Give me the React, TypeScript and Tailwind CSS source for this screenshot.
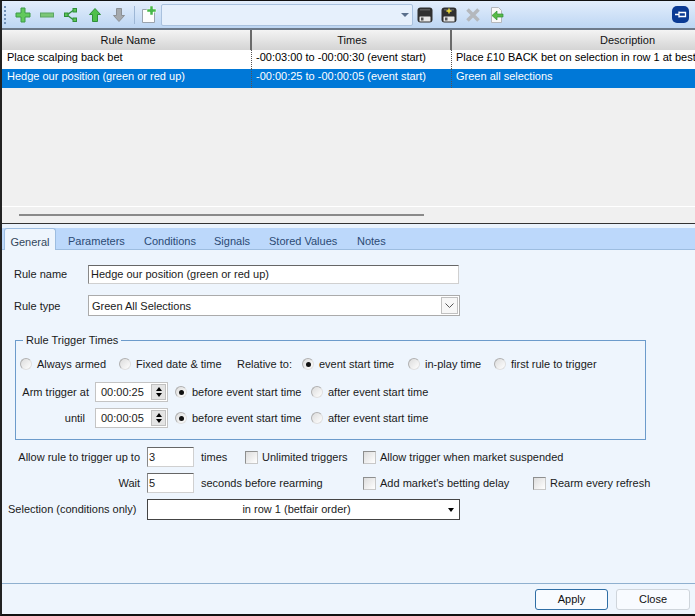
import type { ReactNode } from 'react';

const ruleRows = [
  { name: 'Place scalping back bet', times: '-00:03:00 to -00:00:30 (event start)', desc: 'Place £10 BACK bet on selection in row 1 at best available price' },
  { name: 'Hedge our position (green or red up)', times: '-00:00:25 to -00:00:05 (event start)', desc: 'Green all selections', selected: true },
];

const tabs = [
  { label: 'Parameters', width: 'w-[76px]' },
  { label: 'Conditions', width: 'w-[70px]' },
  { label: 'Signals', width: 'w-[55px]' },
  { label: 'Stored Values', width: 'w-[88px]' },
  { label: 'Notes', width: 'w-[40px]' },
];

function PlusIcon() {
  return (
    <svg width="16" height="16" viewBox="0 0 16 16">
      <path d="M6 1h4v5h5v4h-5v5H6v-5H1V6h5z" fill="#62c95c" stroke="#3c9a48" strokeWidth="1" />
    </svg>
  );
}

function MinusIcon() {
  return (
    <svg width="16" height="16" viewBox="0 0 16 16">
      <rect x="1.5" y="6" width="13" height="4" fill="#7cc777" stroke="#5aa565" />
    </svg>
  );
}

function BranchIcon() {
  return (
    <svg width="14" height="16" viewBox="0 0 14 16">
      <path d="M3 8 9 3.5M3 8l6 4.5" fill="none" stroke="#2f8f3a" strokeWidth="1.4" />
      <rect x="0.5" y="6" width="3.5" height="3.5" fill="#5cc455" stroke="#2f8f3a" />
      <rect x="9" y="1.5" width="3.5" height="3.5" fill="#5cc455" stroke="#2f8f3a" />
      <rect x="9" y="11" width="3.5" height="3.5" fill="#5cc455" stroke="#2f8f3a" />
    </svg>
  );
}

function ArrowIcon({ up, color, edge }: { up?: boolean; color: string; edge: string }) {
  return (
    <svg width="12" height="14" viewBox="0 0 12 14">
      <path
        d={up ? 'M6 .5 11.5 6.5H8.5v7h-5v-7H.5z' : 'M6 13.5 11.5 7.5H8.5v-7h-5v7H.5z'}
        fill={color}
        stroke={edge}
      />
    </svg>
  );
}

function NewDocIcon() {
  return (
    <svg width="16" height="18" viewBox="0 0 16 18">
      <path d="M1.5 3.5h9l3 3v10h-12z" fill="#fdfdfd" stroke="#9aa3ad" />
      <path d="M9 0h3v3h3v3h-3v3H9V6H6V3h3z" fill="#47b84a" stroke="#fff" strokeWidth="0.5" />
    </svg>
  );
}

function FloppyIcon({ plus }: { plus?: boolean }) {
  return (
    <svg width="16" height="16" viewBox="0 0 16 16">
      <rect x="0.5" y="0.5" width="15" height="15" rx="3" fill="#303030" />
      <rect x="2.5" y="9.5" width="11" height="5" rx="0.5" fill="#e8e8e8" />
      <rect x="4" y="10.5" width="2.5" height="3" fill="#555" />
      <rect x="3" y="2" width="10" height="1.5" fill="#5a5a5a" />
      {plus && <path d="M5.5 4h5M8 1.5v5" stroke="#f5e33c" strokeWidth="1.4" />}
    </svg>
  );
}

function CrossIcon() {
  return (
    <svg width="16" height="16" viewBox="0 0 16 16">
      <path d="M2.5 2.5 13.5 13.5M13.5 2.5 2.5 13.5" stroke="#b4b8bd" strokeWidth="3.6" />
    </svg>
  );
}

function ImportDocIcon() {
  return (
    <svg width="16" height="18" viewBox="0 0 16 18">
      <path d="M2.5 1.5h7l3 3v12h-10z" fill="#f8f8f8" stroke="#b4b8bd" />
      <path d="M3 9.5 8 5v3h6v3H8v3z" fill="#58bb45" stroke="#2f8f3a" strokeWidth="0.7" />
    </svg>
  );
}

function PinIcon() {
  return (
    <svg width="17" height="17" viewBox="0 0 17 17">
      <rect width="17" height="17" rx="5" fill="#0a3a94" />
      <path d="M3 8.5h4M7 5.5v6M7 6.5h6.5v4H7" fill="none" stroke="#fff" strokeWidth="1.3" />
    </svg>
  );
}

function ToolSlot({ children }: { children: ReactNode }) {
  return <div className="flex w-[24px] items-center justify-center">{children}</div>;
}

function Toolbar() {
  return (
    <div className="flex h-[27px] shrink-0 items-center bg-gradient-to-b from-[#e3eefc] to-[#bdd6f3]">
      <div className="ml-[2px] flex h-[18px] w-[2px] flex-col justify-between">
        {[0, 1, 2, 3, 4].map((dot) => (
          <span key={dot} className="h-[2px] w-[2px] bg-[#6f8fb5]" />
        ))}
      </div>
      <div className="ml-[5px] flex items-center">
        <ToolSlot><PlusIcon /></ToolSlot>
        <ToolSlot><MinusIcon /></ToolSlot>
        <ToolSlot><BranchIcon /></ToolSlot>
        <ToolSlot><ArrowIcon up color="#4fc04a" edge="#2f8f3a" /></ToolSlot>
        <ToolSlot><ArrowIcon color="#a5a9ad" edge="#8c9095" /></ToolSlot>
      </div>
      <div className="ml-[3px] h-[18px] w-[1px] bg-[#9db7d6]" />
      <div className="ml-[6px]"><NewDocIcon /></div>
      <div className="ml-[4px] flex h-[22px] w-[252px] items-center justify-end rounded-[2px] border border-[#a9c1de] bg-[#e6f0fc] pr-[3px]">
        <span className="h-0 w-0 border-x-[4px] border-t-[4px] border-x-transparent border-t-[#5a6f8c]" />
      </div>
      <div className="flex items-center">
        <ToolSlot><FloppyIcon /></ToolSlot>
        <ToolSlot><FloppyIcon plus /></ToolSlot>
        <ToolSlot><CrossIcon /></ToolSlot>
        <ToolSlot><ImportDocIcon /></ToolSlot>
      </div>
      <div className="ml-auto mr-[6px]"><PinIcon /></div>
    </div>
  );
}

function RulesGrid() {
  return (
    <div className="flex h-[195px] shrink-0 flex-col overflow-hidden border-t-2 border-[#6d7a8a] bg-[#f0f0f0]">
      <div className="flex h-[20px] shrink-0 bg-gradient-to-b from-[#f4f4f4] to-[#d4d4d4] text-[#111]">
        <div className="flex w-[250px] shrink-0 items-center justify-center border-r-2 border-[#6a6a6a] pl-[4px]">Rule Name</div>
        <div className="flex w-[200px] shrink-0 items-center justify-center border-r-2 border-[#6a6a6a] pl-[2px]">Times</div>
        <div className="flex flex-1 items-center justify-center pl-[108px]">Description</div>
      </div>
      {ruleRows.map((row) => (
        <div
          key={row.name}
          className={`flex h-[19px] shrink-0 whitespace-nowrap ${row.selected ? 'bg-[#0078d7] text-white' : 'bg-white text-black'}`}
        >
          <div className="w-[250px] shrink-0 border-r border-dotted border-[#555] pl-[5px] leading-[15px]">{row.name}</div>
          <div className="w-[200px] shrink-0 border-r border-dotted border-[#555] pl-[4px] leading-[15px]">{row.times}</div>
          <div className="min-w-0 flex-1 overflow-hidden pl-[4px] leading-[15px]">{row.desc}</div>
        </div>
      ))}
      <div className="mt-auto flex h-[17px] shrink-0 items-center border-t border-white pl-[17px]">
        <div className="h-[2px] w-[405px] bg-[#8a8a8a]" />
      </div>
    </div>
  );
}

function Radio({ checked }: { checked?: boolean }) {
  return (
    <span className="flex h-[12px] w-[12px] shrink-0 items-center justify-center rounded-full border border-[#b0b0b0] border-r-[#e0e0e0] border-b-[#e0e0e0] bg-gradient-to-br from-[#dcdcdc] to-white">
      {checked && <span className="h-[5px] w-[5px] rounded-full bg-[#111]" />}
    </span>
  );
}

function RadioLabel({ label, checked, width }: { label: string; checked?: boolean; width?: string }) {
  return (
    <span className={`flex shrink-0 items-center gap-[5px] whitespace-nowrap ${width ?? ''}`}>
      <Radio checked={checked} />
      {label}
    </span>
  );
}

function CheckLabel({ label, width }: { label: string; width?: string }) {
  return (
    <span className={`flex shrink-0 items-center gap-[4px] whitespace-nowrap ${width ?? ''}`}>
      <span className="h-[13px] w-[13px] shrink-0 border border-[#8e8f8f] border-r-[#c8c8c8] border-b-[#c8c8c8] bg-gradient-to-br from-[#dcdcdc] to-white" />
      {label}
    </span>
  );
}

function TimeSpinner({ value }: { value: string }) {
  return (
    <div className="flex h-[20px] w-[73px] shrink-0 items-center justify-between border border-[#c4c4c4] bg-white pl-[5px] pr-[1px]">
      {value}
      <div className="flex h-[16px] w-[15px] flex-col items-center justify-center gap-[2px] border border-[#c0c0c0] bg-[#e4e4e4]">
        <span className="h-0 w-0 border-x-[3.5px] border-b-[4px] border-x-transparent border-b-black" />
        <span className="h-0 w-0 border-x-[3.5px] border-t-[4px] border-x-transparent border-t-black" />
      </div>
    </div>
  );
}

function SmallInput({ value }: { value: string }) {
  return (
    <div className="ml-[7px] flex h-[20px] w-[47px] shrink-0 items-center border border-[#d0d0d0] border-t-[#666] border-l-[#888] bg-white pl-[1px]">
      {value}
    </div>
  );
}

function GeneralTab() {
  return (
    <div className="flex min-h-0 flex-1 flex-col bg-[#eef5fd] text-[#1a1a1a]">
      <div className="mt-[15px] flex h-[19px] items-center">
        <span className="ml-[12px] w-[74px]">Rule name</span>
        <div className="flex h-[19px] w-[371px] items-center border border-[#d0d0d0] border-t-[#666] border-l-[#888] bg-white pl-[2px]">
          Hedge our position (green or red up)
        </div>
      </div>
      <div className="mt-[11px] flex h-[21px] items-center pt-[1px]">
        <span className="ml-[12px] w-[74px]">Rule type</span>
        <div className="-mt-[1px] flex h-[21px] w-[372px] items-center justify-between border border-[#ababab] bg-white pl-[3px] pr-[1px]">
          <span className="pt-[1px]">Green All Selections</span>
          <span className="flex h-[17px] w-[17px] items-center justify-center border border-[#c0c0c0] bg-[#f7f7f7]">
            <svg width="9" height="5" viewBox="0 0 9 5"><path d="M.5.5 4.5 4.5 8.5.5" fill="none" stroke="#555" /></svg>
          </span>
        </div>
      </div>

      <fieldset className="mt-[17px] ml-[13px] h-[107px] w-[631px] border border-[#6c9bcb]">
        <legend className="ml-[7px] px-[3px] leading-[14px]">Rule Trigger Times</legend>
        <div className="mt-[8px] flex h-[18px] items-center pl-[4px]">
          <RadioLabel label="Always armed" width="w-[99px]" />
          <RadioLabel label="Fixed date & time" width="w-[118px]" />
          <span className="w-[65px] shrink-0">Relative to:</span>
          <RadioLabel label="event start time" checked width="w-[106px]" />
          <RadioLabel label="in-play time" width="w-[86px]" />
          <RadioLabel label="first rule to trigger" />
        </div>
        <div className="mt-[9px] flex h-[20px] items-center">
          <span className="w-[73px] shrink-0 text-right">Arm trigger at</span>
          <div className="ml-[6px]"><TimeSpinner value="00:00:25" /></div>
          <div className="ml-[7px]"><RadioLabel label="before event start time" checked width="w-[136px]" /></div>
          <RadioLabel label="after event start time" />
        </div>
        <div className="mt-[6px] flex h-[20px] items-center">
          <span className="w-[69px] shrink-0 text-right">until</span>
          <div className="ml-[10px]"><TimeSpinner value="00:00:05" /></div>
          <div className="ml-[7px]"><RadioLabel label="before event start time" checked width="w-[136px]" /></div>
          <RadioLabel label="after event start time" />
        </div>
      </fieldset>

      <div className="mt-[7px] flex h-[20px] items-center">
        <span className="w-[138px] shrink-0 text-right">Allow rule to trigger up to</span>
        <SmallInput value="3" />
        <span className="ml-[7px] w-[44px] shrink-0">times</span>
        <CheckLabel label="Unlimited triggers" width="w-[118px]" />
        <CheckLabel label="Allow trigger when market suspended" />
      </div>
      <div className="mt-[6px] flex h-[20px] items-center">
        <span className="w-[138px] shrink-0 text-right">Wait</span>
        <SmallInput value="5" />
        <span className="ml-[7px] w-[162px] shrink-0">seconds before rearming</span>
        <CheckLabel label="Add market's betting delay" width="w-[170px]" />
        <CheckLabel label="Rearm every refresh" />
      </div>
      <div className="mt-[6px] flex h-[21px] items-center">
        <span className="ml-[6px] w-[132px] shrink-0 whitespace-nowrap">Selection (conditions only)</span>
        <div className="relative ml-[7px] flex h-[21px] w-[313px] items-center justify-center border border-[#444] bg-white pr-[14px]">
          in row 1 (betfair order)
          <span className="absolute right-[5px] h-0 w-0 border-x-[3.5px] border-t-[4px] border-x-transparent border-t-black" />
        </div>
      </div>
    </div>
  );
}

function TabStrip() {
  return (
    <div className="flex h-[22px] shrink-0 items-end border-b border-[#9dbde0] bg-[#bcd8fb] pl-[1px]">
      <div className="-mb-[1px] ml-[1px] flex h-[22px] w-[52px] items-center justify-center rounded-t-[3px] border border-b-0 border-[#9dbde0] bg-[#eef5fd] pt-[6px] text-[#33475c]">General</div>
      <div className="ml-[12px] flex">
        {tabs.map((tab) => (
          <div key={tab.label} className={`flex h-[21px] items-center pt-[5px] text-[#2b4a74] ${tab.width}`}>{tab.label}</div>
        ))}
      </div>
    </div>
  );
}

export default function App() {
  return (
    <div className="flex h-[616px] w-[695px] flex-col overflow-hidden border-t border-b-2 border-l-2 border-t-[#111] border-b-[#111] border-l-[#222] bg-[#eef5fd] font-['Liberation_Sans',Arial,sans-serif] text-[11px]">
      <Toolbar />
      <RulesGrid />
      <div className="h-[1px] shrink-0 bg-[#333]" />
      <div className="h-[4px] shrink-0 bg-[#eaf3fd]" />
      <TabStrip />
      <GeneralTab />
      <div className="flex h-[31px] shrink-0 items-center justify-end gap-[8px] border-t border-[#8fb0cf] pr-[5px]">
        <button className="h-[21px] w-[73px] rounded-[3px] border border-[#2f6ea5] bg-[#f8fbff] text-[#111]">Apply</button>
        <button className="h-[21px] w-[74px] rounded-[3px] border border-[#cfd5db] bg-[#f8fbff] text-[#111]">Close</button>
      </div>
    </div>
  );
}
